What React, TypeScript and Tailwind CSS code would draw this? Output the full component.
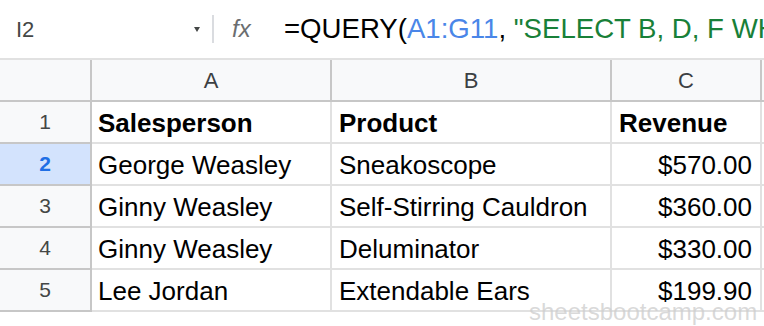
const rows = [
  { n: 1, a: "Salesperson", b: "Product", c: "Revenue", head: true },
  { n: 2, a: "George Weasley", b: "Sneakoscope", c: "$570.00", selected: true },
  { n: 3, a: "Ginny Weasley", b: "Self-Stirring Cauldron", c: "$360.00" },
  { n: 4, a: "Ginny Weasley", b: "Deluminator", c: "$330.00" },
  { n: 5, a: "Lee Jordan", b: "Extendable Ears", c: "$199.90" },
];

function FormulaBar() {
  return (
    <div className="flex h-[58px] items-center whitespace-nowrap bg-white">
      <div className="flex w-[212px] shrink-0 items-center pl-[16px] pr-[12px]">
        <span className="flex-1 text-[22px] text-[#444746]">I2</span>
        <svg width="6" height="5" viewBox="0 0 6 5" className="mt-[1px]">
          <path d="M0 0h6L3 5z" fill="#444746" />
        </svg>
      </div>
      <div className="h-[28px] w-[2px] shrink-0 bg-[#dadce0]" />
      <span className="ml-[18px] w-[52px] shrink-0 text-[24px] italic text-[#6b6e70]">fx</span>
      <div className="overflow-hidden text-[27.6px] text-black">
        =QUERY(<span className="text-[#4a86e8]">A1:G11</span>,{" "}
        <span className="text-[#188038]">"SELECT B, D, F WHERE</span>
      </div>
    </div>
  );
}

export default function App() {
  return (
    <div className="relative h-[326px] w-[764px] overflow-hidden bg-white font-['Liberation_Sans',Arial,sans-serif]">
      <FormulaBar />
      <div className="grid grid-cols-[92px_240px_280px_150px_1fr] border-t-2 border-[#e1e1e1]">
        <div className="h-[42px] border-r-2 border-b-2 border-[#c7c7c7] bg-[#f8f9fa]" />
        {["A", "B", "C"].map((l) => (
          <div
            key={l}
            className="flex h-[42px] items-center justify-center border-r-2 border-b-2 border-[#c7c7c7] bg-[#f8f9fa] text-[22px] text-[#3c4043]"
          >
            {l}
          </div>
        ))}
        <div className="h-[42px] border-b-2 border-[#c7c7c7] bg-[#f8f9fa]" />

        {rows.map((r) => (
          <div key={r.n} className="contents">
            <div
              className={`flex h-[42px] items-center justify-center border-r-2 border-b-2 border-[#c7c7c7] text-[21px] ${
                r.selected ? "bg-[#d3e3fd] font-bold text-[#1f6fe5]" : "bg-[#f8f9fa] text-[#444746]"
              }`}
            >
              {r.n}
            </div>
            <div
              className={`flex h-[42px] items-center border-r-2 border-b-2 border-[#e1e1e1] pl-[6px] pt-[2px] text-[26px] text-black ${
                r.head ? "font-bold" : ""
              }`}
            >
              {r.a}
            </div>
            <div
              className={`flex h-[42px] items-center whitespace-nowrap border-r-2 border-b-2 border-[#e1e1e1] pl-[7px] pt-[2px] text-[26px] text-black ${
                r.head ? "font-bold" : ""
              }`}
            >
              {r.b}
            </div>
            <div
              className={`flex h-[42px] items-center border-r-2 border-b-2 border-[#e1e1e1] pt-[2px] text-[26px] text-black ${
                r.head ? "pl-[7px] font-bold" : "justify-end pr-[8px]"
              }`}
            >
              {r.c}
            </div>
            <div className="h-[42px] border-b-2 border-[#e1e1e1]" />
          </div>
        ))}
      </div>
      <span className="pointer-events-none absolute left-[529px] top-[294px] text-[24px] text-[#cfcfcf]/80">
        sheetsbootcamp.com
      </span>
    </div>
  );
}
